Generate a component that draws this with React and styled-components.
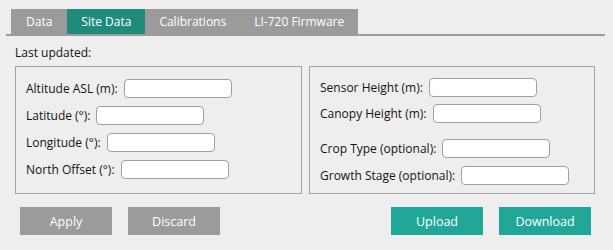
import React from 'react'
import styled, { createGlobalStyle } from 'styled-components'

const GlobalStyle = createGlobalStyle`
  html, body {
    margin: 0;
    padding: 0;
    background: #eeeeee;
  }
  body {
    font-family: 'Open Sans', 'Noto Sans', sans-serif;
    color: #141414;
  }
`

const Page = styled.div`
  width: 613px;
  height: 250px;
  background: #eeeeee;
  overflow: hidden;
`

const TabBar = styled.div`
  display: flex;
  margin: 9px 8px 0 6px;
  padding-left: 5px;
  border-bottom: 2px solid #9b9b9b;
`

const Tab = styled.div`
  height: 25px;
  padding: 0 ${(p) => p.$pad}px;
  display: flex;
  align-items: center;
  font-size: 12px;
  color: #fff;
  background: ${(p) => (p.$active ? '#1f8b7d' : '#9b9b9b')};
`

const Body = styled.div`
  padding: 9px 18px 0 15px;
`

const Updated = styled.div`
  font-size: 12px;
  line-height: 16px;
  margin-bottom: 5px;
`

const Panels = styled.div`
  display: flex;
  gap: 7px;
`

const Panel = styled.div`
  box-sizing: border-box;
  width: ${(p) => p.$w}px;
  height: 128px;
  border: 1px solid #a3a3a3;
  padding: ${(p) => p.$top}px 0 0 10px;
  display: flex;
  flex-direction: column;
`

const Row = styled.div`
  display: flex;
  align-items: center;
  gap: 6px;
  height: 19px;
  margin-bottom: ${(p) => p.$gap}px;
`

const Label = styled.label`
  font-size: 12px;
  white-space: nowrap;
`

const Field = styled.input`
  box-sizing: border-box;
  width: 108px;
  height: 19px;
  border: 1px solid #a0a0a0;
  border-radius: 4px;
  background: #fff;
  outline: none;
`

const Buttons = styled.div`
  display: flex;
  gap: 16px;
  padding: 13px 22px 0 20px;
`

const Spacer = styled.div`
  flex: 1;
`

const Button = styled.button`
  width: 92px;
  height: 28px;
  border: none;
  border-radius: 0;
  font-family: 'Open Sans', 'Noto Sans', sans-serif;
  font-size: 12.5px;
  color: #fff;
  background: ${(p) => (p.$teal ? '#21a797' : '#9b9b9b')};
  cursor: pointer;
`

const tabs = [
  { name: 'Data', pad: 15 },
  { name: 'Site Data', pad: 14, active: true },
  { name: 'Calibrations', pad: 14 },
  { name: 'LI-720 Firmware', pad: 14 },
]

const leftRows = [
  { label: 'Altitude ASL (m):', gap: 8 },
  { label: 'Latitude (°):', gap: 8 },
  { label: 'Longitude (°):', gap: 8 },
  { label: 'North Offset (°):', gap: 0 },
]

const rightRows = [
  { label: 'Sensor Height (m):', gap: 7 },
  { label: 'Canopy Height (m):', gap: 16 },
  { label: 'Crop Type (optional):', gap: 8 },
  { label: 'Growth Stage (optional):', gap: 0 },
]

export default function App() {
  return (
    <Page>
      <GlobalStyle />
      <TabBar>
        {tabs.map((t) => (
          <Tab key={t.name} $pad={t.pad} $active={t.active}>{t.name}</Tab>
        ))}
      </TabBar>
      <Body>
        <Updated>Last updated:</Updated>
        <Panels>
          <Panel $w={288} $top={12}>
            {leftRows.map((r) => (
              <Row key={r.label} $gap={r.gap}>
                <Label>{r.label}</Label>
                <Field type="text" />
              </Row>
            ))}
          </Panel>
          <Panel $w={287} $top={11}>
            {rightRows.map((r) => (
              <Row key={r.label} $gap={r.gap}>
                <Label>{r.label}</Label>
                <Field type="text" />
              </Row>
            ))}
          </Panel>
        </Panels>
      </Body>
      <Buttons>
        <Button>Apply</Button>
        <Button>Discard</Button>
        <Spacer />
        <Button $teal>Upload</Button>
        <Button $teal>Download</Button>
      </Buttons>
    </Page>
  )
}
